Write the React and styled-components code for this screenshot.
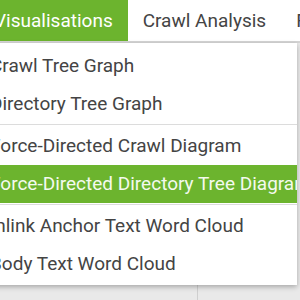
import React from "react";
import styled, { createGlobalStyle } from "styled-components";

const Global = createGlobalStyle`
  html, body { margin: 0; padding: 0; background: #ffffff; overflow: hidden; }
  body { font-family: Roboto, "Liberation Sans", Arial, sans-serif; }
`;

const Wrapper = styled.div`
  position: relative;
  margin-left: -21px;
  width: 340px;
  height: 300px;
`;

const TopBar = styled.div`
  display: flex;
  height: 41px;
  border-bottom: 2px solid #d4d4d4;
  background: #ffffff;
`;

const Tab = styled.div`
  display: flex;
  align-items: center;
  padding: 0 15px;
  font-size: 19px;
  white-space: nowrap;
  color: ${(p) => (p.$active ? "#ffffff" : "#444444")};
  background: ${(p) => (p.$active ? "#6cb42e" : "transparent")};
`;

const Main = styled.div`
  display: grid;
  grid-template-columns: 219px 1fr;
  height: 257px;
  background: #e9e9e9;
`;

const Column = styled.div`
  border-right: ${(p) => (p.$divider ? "1px solid #cfcfcf" : "none")};
`;

const Menu = styled.div`
  position: absolute;
  top: 43px;
  left: 0;
  width: 318px;
  background: #ffffff;
  padding: 4px 0 2px;
  box-shadow: 0 2px 5px rgba(0, 0, 0, 0.28);
`;

const Item = styled.div`
  height: 38px;
  line-height: 38px;
  padding-left: 11px;
  font-size: 19px;
  white-space: nowrap;
  overflow: hidden;
  color: ${(p) => (p.$active ? "#f4faee" : "#444444")};
  background: ${(p) => (p.$active ? "#6cb42e" : "transparent")};
`;

const Separator = styled.div`
  height: 1px;
  margin: 1px 0 2px;
  background: #dcdcdc;
`;

export default function App() {
  return (
    <>
      <Global />
      <Wrapper>
        <TopBar>
          <Tab $active>Visualisations</Tab>
          <Tab>Crawl Analysis</Tab>
          <Tab>Reports</Tab>
        </TopBar>
        <Main>
          <Column $divider />
          <Column />
        </Main>
        <Menu>
          <Item>Crawl Tree Graph</Item>
          <Item>Directory Tree Graph</Item>
          <Separator />
          <Item>Force-Directed Crawl Diagram</Item>
          <Item $active>Force-Directed Directory Tree Diagram</Item>
          <Separator />
          <Item>Inlink Anchor Text Word Cloud</Item>
          <Item>Body Text Word Cloud</Item>
        </Menu>
      </Wrapper>
    </>
  );
}
